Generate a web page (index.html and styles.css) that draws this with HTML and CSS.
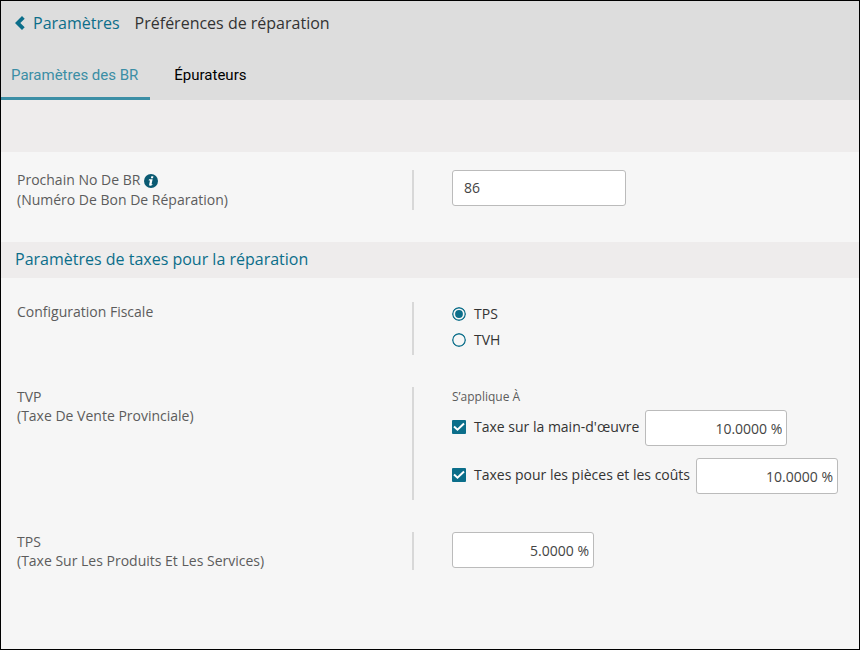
FILE: index.html
```html
<!DOCTYPE html>
<html lang="fr">
<head>
<meta charset="utf-8">
<meta name="viewport" content="width=device-width, initial-scale=1">
<title>Préférences de réparation</title>
<link rel="stylesheet" href="styles.css">
</head>
<body>
<header class="header">
  <div class="breadcrumb">
    <a class="back" href="#parametres">
      <svg class="back-icon" viewBox="0 0 10 14" aria-hidden="true"><path d="M7 0 9.700 2.700 5.300 7 9.700 11.300 7 14 0 7z"/></svg>
      <span>Paramètres</span>
    </a>
    <h1 class="title">Préférences de réparation</h1>
  </div>
  <nav class="tabs">
    <a class="tab active" href="#br" aria-current="page">Paramètres des BR</a>
    <a class="tab" href="#epurateurs">Épurateurs</a>
  </nav>
</header>
<main>
  <form class="form">
    <div class="band"></div>
    <section class="rows first">
      <div class="row">
        <div class="label roomy">
          <label for="next">Prochain No De BR</label>
          <svg class="info" viewBox="0 0 14 14" role="img" aria-label="Information"><circle cx="7" cy="7" r="7"/><path d="M7.300 2.200h2.100l-.4 2H6.900zM5 5.300h3.600L7.600 9.900c-.1.500.2.600 1 .2l-.3 1c-1.700 1-3.500.8-3.100-.9l.8-3.800H4.700z"/></svg>
          <br>(Numéro De Bon De Réparation)
        </div>
        <div class="field"><input class="input next" id="next" type="text" value="86"></div>
      </div>
    </section>
    <h2 class="section-title">Paramètres de taxes pour la réparation</h2>
    <section class="rows">
      <div class="row" role="radiogroup" aria-labelledby="config">
        <div class="label" id="config">Configuration Fiscale</div>
        <div class="field options">
          <label class="choice"><input class="radio" type="radio" name="tax" checked>TPS</label>
          <label class="choice"><input class="radio" type="radio" name="tax">TVH</label>
        </div>
      </div>
      <div class="row">
        <div class="label">TVP<br>(Taxe De Vente Provinciale)</div>
        <div class="field applies">
          <div class="hint">S’applique À</div>
          <div class="line">
            <label class="choice"><input class="check" type="checkbox" checked>Taxe sur la main-d'œuvre</label>
            <input class="input rate" type="text" value="10.0000 %" aria-label="Taux sur la main-d'œuvre">
          </div>
          <div class="line">
            <label class="choice"><input class="check" type="checkbox" checked>Taxes pour les pièces et les coûts</label>
            <input class="input rate" type="text" value="10.0000 %" aria-label="Taux pour les pièces et les coûts">
          </div>
        </div>
      </div>
      <div class="row">
        <label class="label" for="tps">TPS<br>(Taxe Sur Les Produits Et Les Services)</label>
        <div class="field"><input class="input rate" id="tps" type="text" value="5.0000 %"></div>
      </div>
    </section>
  </form>
</main>
</body>
</html>
```
FILE: styles.css
```css
* {
  box-sizing: border-box;
}

body {
  margin: 0;
  min-height: 100vh;
  border: 1px solid #000;
  background: #f6f6f6;
  color: #333;
  font: 14px/19px "Open Sans", sans-serif;
}

.header {
  background: #ddd;
}

.breadcrumb {
  display: flex;
  align-items: center;
  gap: 15px;
  padding: 10px 14px;
  font-size: 16px;
  line-height: 24px;
}

.back {
  display: flex;
  align-items: center;
  gap: 8px;
  color: #0b6e8a;
  text-decoration: none;
}

.back-icon {
  width: 10px;
  height: 14px;
  fill: #0b6e8a;
}

.title {
  margin: 0;
  font-size: 16px;
  font-weight: 400;
}

.tabs {
  display: flex;
  gap: 12px;
}

.tab {
  padding: 21px 12px 12px;
  border-bottom: 3px solid transparent;
  color: #000;
  font: 15px/19px Roboto, sans-serif;
  text-decoration: none;
}

.active {
  padding-left: 10px;
  border-color: #3b8ea5;
  color: #3b8ea5;
}

.band {
  height: 52px;
  background: #eeecec;
}

.rows {
  display: flex;
  flex-direction: column;
  gap: 32px;
  padding: 24px 0 32px;
}

.first {
  padding-top: 18px;
}

.row {
  display: grid;
  grid-template-columns: minmax(0, 411px) 1fr;
}

.label {
  padding-left: 16px;
  color: #5c5c5c;
}

.roomy {
  line-height: 20px;
}

.info {
  width: 14px;
  height: 14px;
  vertical-align: -3px;
  fill: #0b5a72;
}

.info path {
  fill: #fff;
}

.field {
  padding-left: 38px;
  border-left: 2px solid #d8d8d8;
}

.input {
  display: block;
  height: 36px;
  border: 1px solid #bbb;
  border-radius: 3px;
  background: #fff;
  color: #444;
  font: 14px/19px "Open Sans", sans-serif;
}

.next {
  width: 174px;
  padding: 0 11px 2px;
}

.rate {
  width: 142px;
  padding: 0 4px;
  text-align: right;
}

.section-title {
  margin: 0;
  padding: 5px 14px 7px;
  background: #eeecec;
  color: #0b6e8a;
  font-size: 16px;
  font-weight: 400;
  line-height: 24px;
}

.options {
  display: flex;
  flex-direction: column;
  align-items: flex-start;
  gap: 7px;
  padding-top: 2px;
  padding-bottom: 6px;
}

.choice {
  display: flex;
  align-items: center;
  gap: 8px;
}

.radio,
.check {
  flex: none;
  width: 14px;
  height: 14px;
  margin: 0;
  appearance: none;
}

.radio {
  border-radius: 50%;
  background: url("data:image/svg+xml,%3Csvg xmlns='http://www.w3.org/2000/svg' viewBox='0 0 14 14'%3E%3Ccircle cx='7' cy='7' r='6.300' fill='none' stroke='%230b6e8a' stroke-width='1.400'/%3E%3C/svg%3E");
}

.radio:checked {
  background: url("data:image/svg+xml,%3Csvg xmlns='http://www.w3.org/2000/svg' viewBox='0 0 14 14'%3E%3Ccircle cx='7' cy='7' r='6.300' fill='none' stroke='%230b6e8a' stroke-width='1.400'/%3E%3Ccircle cx='7' cy='7' r='3.900' fill='%230b6e8a'/%3E%3C/svg%3E");
}

.check {
  border-radius: 1px;
}

.check:checked {
  background: #0b6e8a url("data:image/svg+xml,%3Csvg xmlns='http://www.w3.org/2000/svg' viewBox='0 0 14 14'%3E%3Cpath d='M2 6.500 5.500 9.700 12 3.500' fill='none' stroke='white' stroke-width='2'/%3E%3C/svg%3E");
}

.applies {
  display: flex;
  flex-direction: column;
  gap: 12px;
  padding-bottom: 6px;
}

.hint {
  margin-bottom: -8px;
  color: #5c5c5c;
  font-size: 12px;
}

.line {
  display: flex;
  align-items: center;
  gap: 6px;
}

.line .choice {
  padding-bottom: 3px;
}
```
